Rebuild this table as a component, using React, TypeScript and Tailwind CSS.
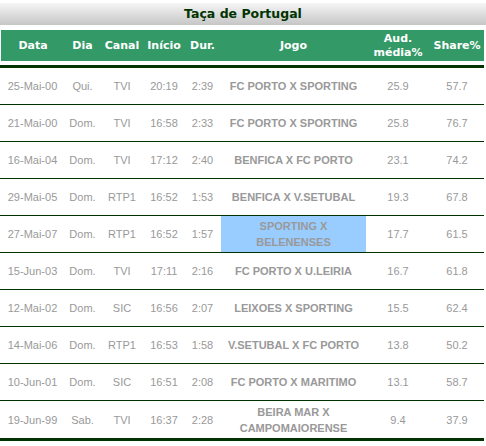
import React from "react";

const rows = [
  { data: "25-Mai-00", dia: "Qui.", canal: "TVI", inicio: "20:19", dur: "2:39", jogo: "FC PORTO X SPORTING", aud: "25.9", share: "57.7" },
  { data: "21-Mai-00", dia: "Dom.", canal: "TVI", inicio: "16:58", dur: "2:33", jogo: "FC PORTO X SPORTING", aud: "25.8", share: "76.7" },
  { data: "16-Mai-04", dia: "Dom.", canal: "TVI", inicio: "17:12", dur: "2:40", jogo: "BENFICA X FC PORTO", aud: "23.1", share: "74.2" },
  { data: "29-Mai-05", dia: "Dom.", canal: "RTP1", inicio: "16:52", dur: "1:53", jogo: "BENFICA X V.SETUBAL", aud: "19.3", share: "67.8" },
  { data: "27-Mai-07", dia: "Dom.", canal: "RTP1", inicio: "16:52", dur: "1:57", jogo: "SPORTING X BELENENSES", aud: "17.7", share: "61.5", hl: true },
  { data: "15-Jun-03", dia: "Dom.", canal: "TVI", inicio: "17:11", dur: "2:16", jogo: "FC PORTO X U.LEIRIA", aud: "16.7", share: "61.8" },
  { data: "12-Mai-02", dia: "Dom.", canal: "SIC", inicio: "16:56", dur: "2:07", jogo: "LEIXOES X SPORTING", aud: "15.5", share: "62.4" },
  { data: "14-Mai-06", dia: "Dom.", canal: "RTP1", inicio: "16:53", dur: "1:58", jogo: "V.SETUBAL X FC PORTO", aud: "13.8", share: "50.2" },
  { data: "10-Jun-01", dia: "Dom.", canal: "SIC", inicio: "16:51", dur: "2:08", jogo: "FC PORTO X MARITIMO", aud: "13.1", share: "58.7" },
  { data: "19-Jun-99", dia: "Sab.", canal: "TVI", inicio: "16:37", dur: "2:28", jogo: "BEIRA MAR X CAMPOMAIORENSE", aud: "9.4", share: "37.9" },
];

export default function App() {
  return (
    <div className="w-[486px] h-[446px] bg-white pt-[3px]">
      <div className="h-[22px] bg-gradient-to-b from-[#f6f6f6] to-[#c6c6c6] flex items-center justify-center">
        <span className="font-['DejaVu_Sans',sans-serif] font-bold text-[12.5px] text-[#003300]">Taça de Portugal</span>
      </div>

      <div className="w-[484px] mt-[5px]">
        {/* header */}
        <div className="ml-[1px] h-[31px] bg-[#339966] flex items-center text-white font-['DejaVu_Sans',sans-serif] font-bold text-[11px] leading-[14px] text-center">
          <div className="w-[64px]">Data</div>
          <div className="w-[35px]">Dia</div>
          <div className="w-[44px]">Canal</div>
          <div className="w-[40px]">Início</div>
          <div className="w-[37px]">Dur.</div>
          <div className="w-[145px]">Jogo</div>
          <div className="w-[64px]">Aud.<br />média%</div>
          <div className="w-[54px]">Share%</div>
        </div>

        <div className="mt-[4px] border-t-[3px] border-[#003300] border-b-[3px]">
          {rows.map((r, i) => (
            <div
              key={i}
              className={`h-[37px] flex items-stretch text-center font-['Liberation_Sans',Arial,sans-serif] text-[11px] leading-[16px] text-[#999999] ${i < rows.length - 1 ? "border-b border-[#003300]" : ""}`}
            >
              <div className="w-[65px] flex items-center justify-center">{r.data}</div>
              <div className="w-[35px] flex items-center justify-center">{r.dia}</div>
              <div className="w-[44px] flex items-center justify-center">{r.canal}</div>
              <div className="w-[40px] flex items-center justify-center">{r.inicio}</div>
              <div className="w-[37px] flex items-center justify-center">{r.dur}</div>
              <div className={`w-[145px] flex items-center justify-center font-bold px-[6px] ${r.hl ? "bg-[#99ccff]" : ""}`}>{r.jogo}</div>
              <div className="w-[64px] flex items-center justify-center">{r.aud}</div>
              <div className="w-[54px] flex items-center justify-center">{r.share}</div>
            </div>
          ))}
        </div>
      </div>
    </div>
  );
}
